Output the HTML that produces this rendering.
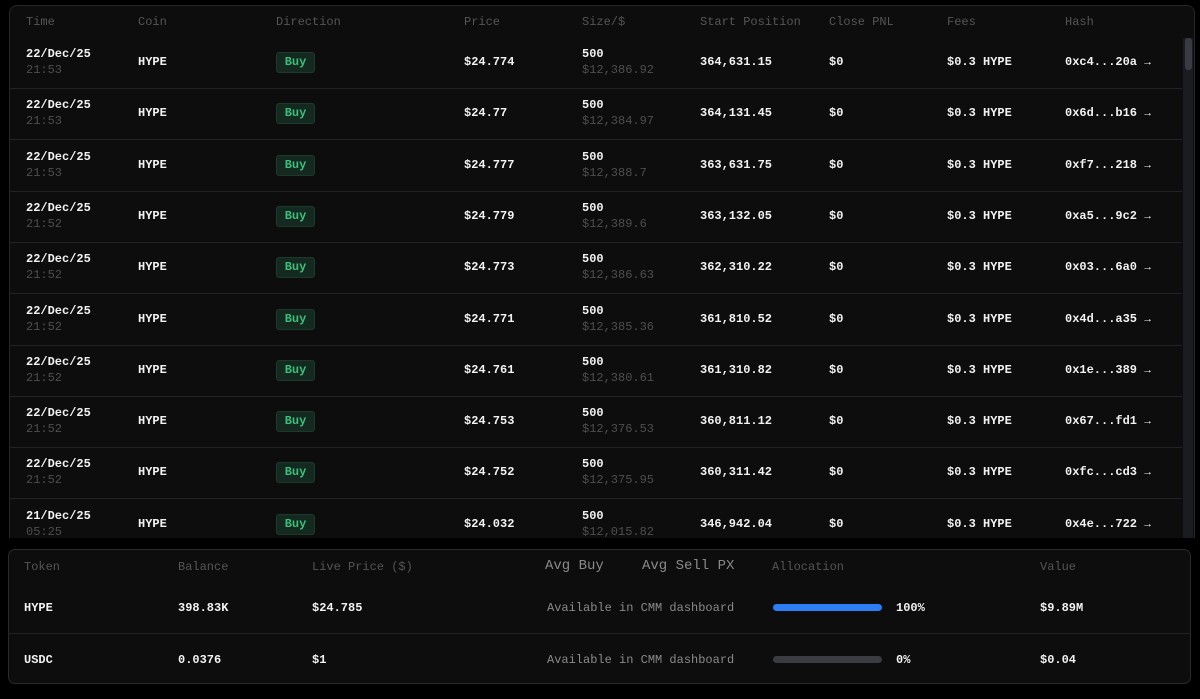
<!DOCTYPE html>
<html><head><meta charset="utf-8"><style>
*{margin:0;padding:0;box-sizing:border-box}
body{width:1200px;height:699px;background:#000;font-family:"Liberation Mono",monospace;color:#f0f0f0;position:relative;overflow:hidden}
.p1{position:absolute;left:9px;top:5px;width:1186px;height:533px;background:#0d0d0e;border:1px solid #26262a;border-bottom:none;border-radius:8px 8px 0 0;overflow:hidden}
.p2{position:absolute;left:8px;top:549px;width:1183px;height:135px;background:#0d0d0e;border:1px solid #2a2a2e;border-radius:7px}
.t{position:absolute;white-space:nowrap;font-size:12px}
.h{color:#555;font-weight:normal}
.b{font-weight:bold;color:#f2f2f2}
.s{color:#4e4e4e;font-weight:normal}
.row{position:absolute;left:0;width:1172px;height:51px;border-bottom:1px solid #222226}
.badge{position:absolute;left:266px;top:14px;width:39px;height:21px;background:#14291f;border:1px solid #1c3a2b;border-radius:3px;color:#3cbf7a;font-size:12px;font-weight:bold;text-align:center;line-height:19px}
.sb{position:absolute;left:1173px;top:32px;width:10px;height:501px;background:#1b1b22}
.th{position:absolute;left:1175px;top:32px;width:7px;height:32px;background:#3a3a44;border-radius:3px}
.bar{position:absolute;height:7px;border-radius:4px;width:109px}
</style></head><body>
<div class="p1">
<div class="t h" style="left:16px;top:9px">Time</div>
<div class="t h" style="left:128px;top:9px">Coin</div>
<div class="t h" style="left:266px;top:9px">Direction</div>
<div class="t h" style="left:454px;top:9px">Price</div>
<div class="t h" style="left:572px;top:9px">Size/$</div>
<div class="t h" style="left:690px;top:9px">Start Position</div>
<div class="t h" style="left:819px;top:9px">Close PNL</div>
<div class="t h" style="left:937px;top:9px">Fees</div>
<div class="t h" style="left:1055px;top:9px">Hash</div>
<div class="sb"></div><div class="th"></div>
<div id="rows"></div>
</div>
<div class="p2">
<div class="t h" style="left:15px;top:10px">Token</div>
<div class="t h" style="left:169px;top:10px">Balance</div>
<div class="t h" style="left:303px;top:10px">Live Price ($)</div>
<div class="t" style="left:536px;top:8px;font-size:14px;color:#8a8a8a">Avg Buy</div>
<div class="t" style="left:633px;top:8px;font-size:14px;color:#8a8a8a">Avg Sell PX</div>
<div class="t h" style="left:763px;top:10px">Allocation</div>
<div class="t h" style="left:1031px;top:10px">Value</div>
<div class="t b" style="left:15px;top:51px">HYPE</div>
<div class="t b" style="left:169px;top:51px">398.83K</div>
<div class="t b" style="left:303px;top:51px">$24.785</div>
<div class="t" style="left:538px;top:51px;color:#8a8a8a">Available in CMM dashboard</div>
<div class="bar" style="left:764px;top:54px;background:#2b7ff2"></div>
<div class="t b" style="left:887px;top:51px">100%</div>
<div class="t b" style="left:1031px;top:51px">$9.89M</div>
<div style="position:absolute;left:0;top:83px;width:1181px;border-top:1px solid #222226"></div>
<div class="t b" style="left:15px;top:103px">USDC</div>
<div class="t b" style="left:169px;top:103px">0.0376</div>
<div class="t b" style="left:303px;top:103px">$1</div>
<div class="t" style="left:538px;top:103px;color:#8a8a8a">Available in CMM dashboard</div>
<div class="bar" style="left:764px;top:106px;background:#3b3b42"></div>
<div class="t b" style="left:887px;top:103px">0%</div>
<div class="t b" style="left:1031px;top:103px">$0.04</div>
</div>
<script>
var d=[["22/Dec/25","21:53","$24.774","$12,386.92","364,631.15","0xc4...20a"],
["22/Dec/25","21:53","$24.77","$12,384.97","364,131.45","0x6d...b16"],
["22/Dec/25","21:53","$24.777","$12,388.7","363,631.75","0xf7...218"],
["22/Dec/25","21:52","$24.779","$12,389.6","363,132.05","0xa5...9c2"],
["22/Dec/25","21:52","$24.773","$12,386.63","362,310.22","0x03...6a0"],
["22/Dec/25","21:52","$24.771","$12,385.36","361,810.52","0x4d...a35"],
["22/Dec/25","21:52","$24.761","$12,380.61","361,310.82","0x1e...389"],
["22/Dec/25","21:52","$24.753","$12,376.53","360,811.12","0x67...fd1"],
["22/Dec/25","21:52","$24.752","$12,375.95","360,311.42","0xfc...cd3"],
["21/Dec/25","05:25","$24.032","$12,015.82","346,942.04","0x4e...722"]];
var h="";d.forEach(function(r,i){var top=32+i*51.3;
h+='<div class="row" style="top:'+top+'px">'+
'<div class="t b" style="left:16px;top:9px">'+r[0]+'</div>'+
'<div class="t s" style="left:16px;top:25px">'+r[1]+'</div>'+
'<div class="t b" style="left:128px;top:17px">HYPE</div>'+
'<div class="badge">Buy</div>'+
'<div class="t b" style="left:454px;top:17px">'+r[2]+'</div>'+
'<div class="t b" style="left:572px;top:9px">500</div>'+
'<div class="t s" style="left:572px;top:25px">'+r[3]+'</div>'+
'<div class="t b" style="left:690px;top:17px">'+r[4]+'</div>'+
'<div class="t b" style="left:819px;top:17px">$0</div>'+
'<div class="t b" style="left:937px;top:17px">$0.3 HYPE</div>'+
'<div class="t b" style="left:1055px;top:17px">'+r[5]+' <span style="font-size:11px;font-weight:bold">&#8594;</span></div></div>';});
document.getElementById("rows").innerHTML=h;
</script>
</body></html>
